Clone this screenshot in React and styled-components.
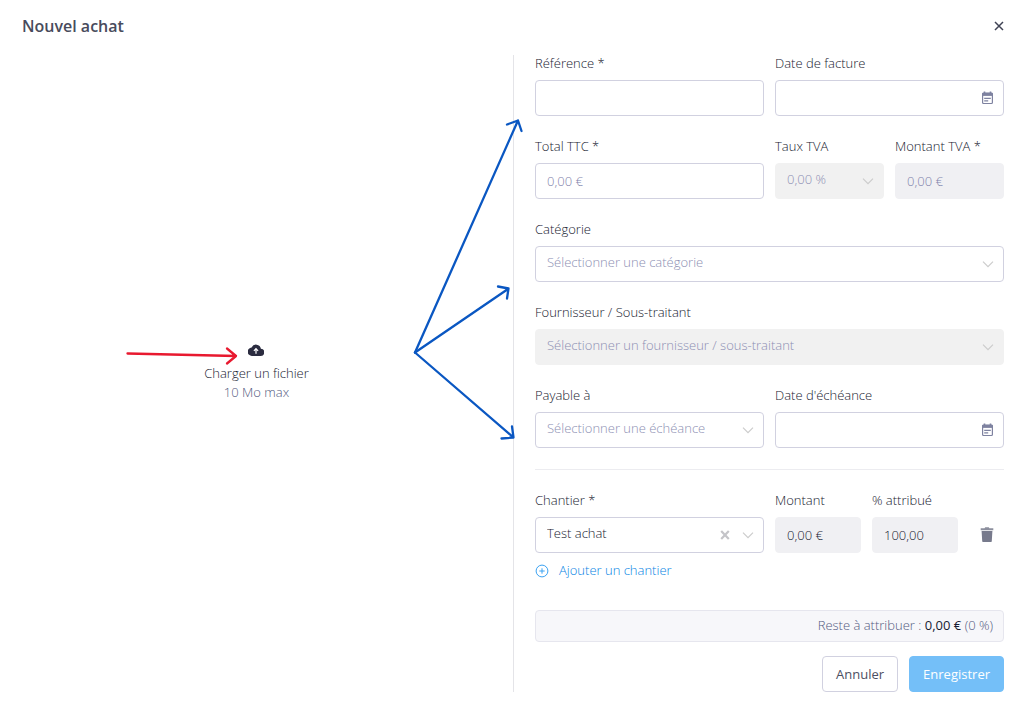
import React, { useState } from 'react';
import styled, { createGlobalStyle } from 'styled-components';

const GlobalStyle = createGlobalStyle`
  * {
    box-sizing: border-box;
  }

  body {
    margin: 0;
    background: #ffffff;
    color: #181a30;
    font-family: "Open Sans", "Noto Sans", sans-serif;
    font-size: 13px;
    font-weight: 300;
    line-height: 17px;
  }

  button, input, select {
    font: inherit;
    color: inherit;
  }
`;

const Modal = styled.div`
  padding: 0 21px 16px 22px;
`;

const Header = styled.header`
  display: flex;
  align-items: center;
  justify-content: space-between;
  height: 55px;
  padding-bottom: 3px;
`;

const Title = styled.h1`
  margin: 0;
  color: #484b5c;
  font-size: 16px;
  line-height: 24px;
  font-weight: 600;
`;

const IconButton = styled.button`
  display: flex;
  align-items: center;
  justify-content: center;
  padding: 0;
  border: 0;
  background: none;
  color: ${({ $color }) => $color || '#3f4254'};
  cursor: pointer;
`;

const Body = styled.div`
  display: grid;
  grid-template-columns: 1fr 1fr;
`;

const UploadPanel = styled.section`
  position: relative;
  display: flex;
  align-items: center;
  justify-content: center;
  padding-right: 22px;
`;

const Upload = styled.label`
  display: flex;
  flex-direction: column;
  align-items: center;
  line-height: 19px;
  cursor: pointer;

  svg {
    margin-bottom: 7px;
  }
`;

const FileInput = styled.input`
  position: absolute;
  width: 1px;
  height: 1px;
  opacity: 0;
`;

const UploadHint = styled.span`
  color: #535a80;
`;

const Arrows = styled.svg`
  position: absolute;
  top: 0;
  left: 0;
  overflow: visible;
  pointer-events: none;
  fill: none;
  stroke-width: 2.3;
  stroke-linecap: round;
  stroke-linejoin: round;
`;

const Form = styled.form`
  padding-left: 21px;
  border-left: 1px solid #e4e4e8;
`;

const Row = styled.div`
  display: grid;
  grid-template-columns: ${({ $columns }) => $columns || '1fr 1fr'};
  gap: 11px;
`;

const Rows = styled.div`
  display: flex;
  flex-direction: column;
  gap: 22px;
`;

const FieldBox = styled.div`
  display: flex;
  flex-direction: column;
  gap: 8px;
  min-width: 0;
`;

const Control = styled.div`
  position: relative;
  display: flex;
`;

const Input = styled.input`
  width: 100%;
  min-width: 0;
  height: 36px;
  padding: 0 11px;
  border: 1px solid #d1d1e0;
  border-radius: 4px;
  background: #ffffff;
  outline: none;

  &::placeholder {
    color: #7f82ab;
    opacity: 1;
  }

  &:disabled {
    border-color: #f0f0f3;
    background: #f0f0f3;
  }
`;

const Select = styled.select`
  appearance: none;
  width: 100%;
  height: 36px;
  padding: 0 32px 3px 11px;
  border: 1px solid #d1d1e0;
  border-radius: 4px;
  background: #ffffff;
  color: ${({ $filled }) => ($filled ? '#181a30' : '#8d8fb3')};
  outline: none;

  &:disabled {
    border-color: #f1f1f1;
    background: #f1f1f1;
    opacity: 1;
  }
`;

const Adornment = styled.div`
  position: absolute;
  top: 0;
  right: 10px;
  display: flex;
  align-items: center;
  gap: 12px;
  height: 100%;
  color: #7e82a0;
  pointer-events: none;

  button {
    pointer-events: auto;
  }
`;

const Separator = styled.hr`
  width: 100%;
  margin: 21px 0 22px;
  border: 0;
  border-top: 1px solid #ececf0;
`;

const DeleteCell = styled.div`
  display: flex;
  align-items: flex-end;

  button {
    width: 100%;
    height: 36px;
  }
`;

const AddLink = styled.a`
  display: inline-flex;
  align-items: center;
  gap: 10px;
  margin-top: 9px;
  color: #0784e4;
  text-decoration: none;
`;

const Remaining = styled.div`
  margin-top: 28px;
  padding: 6px 10px 7px;
  border: 1px solid #e6e6ee;
  border-radius: 4px;
  background: #f7f7fa;
  color: #535a80;
  text-align: right;

  strong {
    color: #181c32;
    font-weight: 400;
  }
`;

const Footer = styled.footer`
  display: flex;
  justify-content: flex-end;
  gap: 11px;
  margin-top: 14px;
`;

const Button = styled.button`
  height: 36px;
  padding: 1px 13px 0;
  border: 1px solid ${({ $primary }) => ($primary ? '#74bff8' : '#d1d1e0')};
  border-radius: 4px;
  background: ${({ $primary }) => ($primary ? '#74bff8' : '#ffffff')};
  color: ${({ $primary }) => ($primary ? '#ffffff' : '#4c4f62')};
  font-weight: 400;
  cursor: pointer;
`;

const CloseIcon = () => (
  <svg width="10" height="10" viewBox="0 0 10 10" fill="none" stroke="currentColor" strokeWidth="1.5">
    <path d="M1 1l8 8M9 1L1 9" />
  </svg>
);

const CloudIcon = () => (
  <svg width="16" height="13" viewBox="0 3 16 13">
    <path
      d="M12.9 7.7A4.9 4.9 0 0 0 3.6 6.5 4.1 4.1 0 0 0 4.1 14.9H12.4A3.6 3.6 0 0 0 12.9 7.7Z"
      fill="#2b2c40"
    />
    <path d="M8 12.7V8.2M5.9 9.8L8 7.7l2.1 2.1" fill="none" stroke="#ffffff" strokeWidth="1.2" />
  </svg>
);

const CalendarIcon = () => (
  <svg width="13" height="14" viewBox="0 0 13 14" fill="none" stroke="currentColor">
    <path d="M3.5 .5v2M9.5 .5v2" strokeWidth="1.6" />
    <rect x="1.6" y="2.1" width="9.8" height="10.4" rx="1" strokeWidth="1.2" />
    <path d="M1.2 3.4h10.6" strokeWidth="3" />
    <path d="M3.2 7.4h6.6M3.2 9.8h4" strokeWidth="1.2" />
  </svg>
);

const ChevronIcon = () => (
  <svg width="12" height="8" viewBox="0 0 12 8" fill="none" stroke="#cccccc" strokeWidth="1.2">
    <path d="M1 1.7l5 5 5-5" />
  </svg>
);

const ClearIcon = () => (
  <svg width="10" height="10" viewBox="0 0 10 10" fill="none" stroke="currentColor" strokeWidth="2.2">
    <path d="M1.2 1l7.6 8M8.8 1L1.2 9" />
  </svg>
);

const PlusIcon = () => (
  <svg width="14" height="14" viewBox="0 0 14 14" fill="none" stroke="#3ba2f2" strokeWidth="1">
    <circle cx="7" cy="7" r="5.9" />
    <path d="M7 4.3v5.4M4.3 7h5.4" />
  </svg>
);

const TrashIcon = () => (
  <svg width="14" height="16" viewBox="0 0 14 16" fill="#777a8c">
    <path d="M4.6 1.2l.6-1h3.6l.6 1h3.9v2H.7v-2z" opacity="0.85" />
    <path d="M1.6 3.9h10.8l-.6 10a1.3 1.3 0 0 1-1.3 1.2H3.5A1.3 1.3 0 0 1 2.2 13.9z" />
  </svg>
);

const Field = ({ id, label, children }) => (
  <FieldBox>
    <label htmlFor={id}>{label}</label>
    <Control>{children}</Control>
  </FieldBox>
);

const DateField = ({ id, label }) => (
  <Field id={id} label={label}>
    <Input id={id} type="text" />
    <Adornment>
      <CalendarIcon />
    </Adornment>
  </Field>
);

const SelectField = ({ id, label, placeholder, disabled }) => (
  <Field id={id} label={label}>
    <Select id={id} disabled={disabled}>
      <option>{placeholder}</option>
    </Select>
    <Adornment>
      <ChevronIcon />
    </Adornment>
  </Field>
);

const App = () => {
  const [chantier, setChantier] = useState('Test achat');

  return (
    <>
      <GlobalStyle />
      <Modal>
        <Header>
          <Title>Nouvel achat</Title>
          <IconButton type="button" aria-label="Fermer">
            <CloseIcon />
          </IconButton>
        </Header>
        <Body>
          <UploadPanel>
            <Upload htmlFor="fichier">
              <CloudIcon />
              <span>Charger un fichier</span>
              <UploadHint>10 Mo max</UploadHint>
              <FileInput id="fichier" type="file" />
            </Upload>
            <Arrows width="491" height="636" viewBox="0 0 491 636">
              <g stroke="#e8192f">
                <path d="M105.5 298.5L214 301M205 293.5l9 7.5-9 7.5" />
              </g>
              <g stroke="#0a57c2">
                <path d="M393 297.5L496 65.5M485 69.5l11-4 3.5 10.5" />
                <path d="M393 297.5L486 234M476 231.5l10.5 2-1.5 10" />
                <path d="M393 297.5L491 382M479.5 383.5l12-1-1.5-11" />
              </g>
            </Arrows>
          </UploadPanel>
          <Form onSubmit={(e) => e.preventDefault()}>
            <Rows>
              <Row>
                <Field id="reference" label="Référence *">
                  <Input id="reference" type="text" />
                </Field>
                <DateField id="date-facture" label="Date de facture" />
              </Row>
              <Row>
                <Field id="total" label="Total TTC *">
                  <Input id="total" type="text" placeholder="0,00 €" />
                </Field>
                <Row>
                  <SelectField id="taux" label="Taux TVA" placeholder="0,00 %" disabled />
                  <Field id="montant-tva" label="Montant TVA *">
                    <Input id="montant-tva" type="text" placeholder="0,00 €" disabled />
                  </Field>
                </Row>
              </Row>
              <SelectField id="categorie" label="Catégorie" placeholder="Sélectionner une catégorie" />
              <SelectField
                id="fournisseur"
                label="Fournisseur / Sous-traitant"
                placeholder="Sélectionner un fournisseur / sous-traitant"
                disabled
              />
              <Row>
                <SelectField id="payable" label="Payable à" placeholder="Sélectionner une échéance" />
                <DateField id="date-echeance" label="Date d'échéance" />
              </Row>
            </Rows>
            <Separator />
            <Row>
              <Field id="chantier" label="Chantier *">
                <Select
                  id="chantier"
                  $filled
                  value={chantier}
                  onChange={(e) => setChantier(e.target.value)}
                >
                  <option value="" />
                  <option>Test achat</option>
                </Select>
                <Adornment>
                  <IconButton type="button" aria-label="Effacer" $color="#c4c4c8" onClick={() => setChantier('')}>
                    <ClearIcon />
                  </IconButton>
                  <ChevronIcon />
                </Adornment>
              </Field>
              <Row $columns="1fr 1fr 35px">
                <Field id="montant" label="Montant">
                  <Input id="montant" type="text" defaultValue="0,00 €" disabled />
                </Field>
                <Field id="attribue" label="% attribué">
                  <Input id="attribue" type="text" defaultValue="100,00" disabled />
                </Field>
                <DeleteCell>
                  <IconButton type="button" aria-label="Supprimer">
                    <TrashIcon />
                  </IconButton>
                </DeleteCell>
              </Row>
            </Row>
            <AddLink href="#">
              <PlusIcon />
              Ajouter un chantier
            </AddLink>
            <Remaining>
              Reste à attribuer : <strong>0,00 €</strong> (0 %)
            </Remaining>
            <Footer>
              <Button type="button">Annuler</Button>
              <Button type="submit" $primary>
                Enregistrer
              </Button>
            </Footer>
          </Form>
        </Body>
      </Modal>
    </>
  );
};

export default App;
